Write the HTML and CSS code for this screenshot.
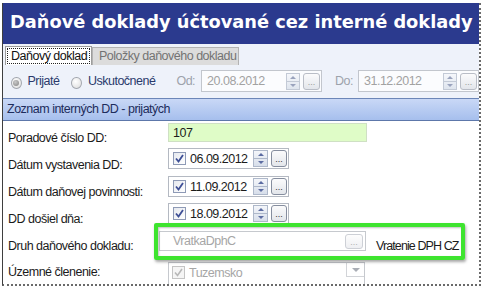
FILE: index.html
```html
<!DOCTYPE html>
<html lang="sk">
<head>
<meta charset="utf-8">
<title>Daňové doklady účtované cez interné doklady</title>
<link rel="stylesheet" href="styles.css">
</head>
<body>
<div class="frame">
  <div class="header"><h1 class="title">Daňové doklady účtované cez interné doklady</h1></div>
  <div class="top">
    <div class="tabs">
      <div class="tab active"><span class="focus">Daňový doklad</span></div>
      <div class="tab">Položky daňového dokladu</div>
    </div>
    <div class="filter">
      <span class="radio checked"></span><span class="rlabel">Prijaté</span>
      <span class="radio second"></span><span class="rlabel">Uskutočnené</span>
      <span class="flabel od">Od:</span>
      <div class="dbox disabled">
        <span class="dtext">20.08.2012</span>
        <span class="spin"><span class="up"></span><span class="down"></span></span>
        <span class="btn">...</span>
      </div>
      <span class="flabel do">Do:</span>
      <div class="dbox disabled">
        <span class="dtext">31.12.2012</span>
        <span class="spin"><span class="up"></span><span class="down"></span></span>
        <span class="btn">...</span>
      </div>
    </div>
  </div>
  <div class="section">Zoznam interných DD - prijatých</div>
  <div class="form">
    <div class="row">
      <span class="label">Poradové číslo DD:</span>
      <div class="input green r1">107</div>
    </div>
    <div class="row">
      <span class="label">Dátum vystavenia DD:</span>
      <div class="dbox form-date r2">
        <span class="check"><svg viewBox="0 0 11 11" width="11" height="11"><path d="M2 5.5 L4.5 8.5 L9 2" fill="none" stroke="#3e4f96" stroke-width="1.8"/></svg></span>
        <span class="dtext">06.09.2012</span>
        <span class="spin"><span class="up"></span><span class="down"></span></span>
        <span class="btn">...</span>
      </div>
    </div>
    <div class="row">
      <span class="label">Dátum daňovej povinnosti:</span>
      <div class="dbox form-date">
        <span class="check"><svg viewBox="0 0 11 11" width="11" height="11"><path d="M2 5.5 L4.5 8.5 L9 2" fill="none" stroke="#3e4f96" stroke-width="1.8"/></svg></span>
        <span class="dtext">11.09.2012</span>
        <span class="spin"><span class="up"></span><span class="down"></span></span>
        <span class="btn">...</span>
      </div>
    </div>
    <div class="row">
      <span class="label">DD došiel dňa:</span>
      <div class="dbox form-date">
        <span class="check"><svg viewBox="0 0 11 11" width="11" height="11"><path d="M2 5.5 L4.5 8.5 L9 2" fill="none" stroke="#3e4f96" stroke-width="1.8"/></svg></span>
        <span class="dtext">18.09.2012</span>
        <span class="spin"><span class="up"></span><span class="down"></span></span>
        <span class="btn">...</span>
      </div>
    </div>
    <div class="row">
      <span class="label">Druh daňového dokladu:</span>
      <div class="input druh">
        <span class="itext">VratkaDphC</span>
        <span class="btn faded">...</span>
      </div>
      <span class="desc">Vratenie DPH CZ</span>
    </div>
    <div class="row last">
      <span class="label">Územné členenie:</span>
      <div class="input combo">
        <span class="check off"><svg viewBox="0 0 11 11" width="11" height="11"><path d="M2 5.5 L4.5 8.5 L9 2" fill="none" stroke="#b8b8b8" stroke-width="1.6"/></svg></span>
        <span class="itext">Tuzemsko</span>
        <span class="drop"></span>
      </div>
    </div>
  </div>
  <div class="highlight"></div>
</div>
</body>
</html>
```

FILE: styles.css
```css
body {
  margin: 0;
  background: #ffffff;
  font-family: "Liberation Sans", Arial, sans-serif;
  font-size: 12.5px;
  letter-spacing: -0.5px;
  color: #1b1b1b;
}

.frame {
  position: relative;
  margin: 3px 0 0 2px;
  width: 476px;
  height: 281px;
  border-left: 1px solid #3f3f3f;
  border-right: 2px dotted #6a6a6a;
  border-bottom: 2px dotted #6a6a6a;
  overflow: hidden;
  background: #ffffff;
}

.header {
  height: 41px;
  background: #2b3a8e;
}

.title {
  margin: 0;
  padding-left: 7px;
  font: bold 17.8px/38px "DejaVu Sans", Verdana, sans-serif;
  letter-spacing: 0;
  color: #ffffff;
  white-space: nowrap;
}

.top {
  height: 54px;
  background: #eef2fa;
}

.tabs {
  display: flex;
  align-items: flex-end;
  height: 21px;
  padding-left: 2px;
}

.tab {
  box-sizing: border-box;
  height: 18px;
  width: 147px;
  padding-left: 6px;
  border: 1px solid #b3b3b3;
  border-bottom: none;
  background: #dcdcdc;
  color: #737373;
  line-height: 17px;
  white-space: nowrap;
}

.tab.active {
  width: 87px;
  height: 19px;
  padding: 1px 0 0 1px;
  background: #ffffff;
  border-color: #9c9c9c;
  color: #111111;
}

.focus {
  display: block;
  width: 83px;
  box-sizing: border-box;
  height: 16px;
  line-height: 14px;
  padding-left: 3px;
  border: 1px dotted #222222;
}

.filter {
  display: flex;
  align-items: flex-start;
  height: 33px;
}

.radio {
  box-sizing: border-box;
  width: 12px;
  height: 12px;
  margin: 12px 0 0 8px;
  border: 1px solid #a4a8b0;
  border-radius: 50%;
  background: radial-gradient(circle at 40% 35%, #ffffff 0%, #e2e2e2 80%);
  display: flex;
  align-items: center;
  justify-content: center;
}

.radio.checked::after {
  content: "";
  width: 6px;
  height: 6px;
  border-radius: 50%;
  background: radial-gradient(circle at 40% 35%, #c9c9c9 0%, #8a8a8a 90%);
}

.radio.second {
  margin-left: 12px;
}

.rlabel {
  margin: 9px 0 0 6px;
  line-height: 14px;
  color: #2a3a6c;
}

.flabel {
  margin-top: 9px;
  line-height: 14px;
  color: #9da2ab;
}

.flabel.od {
  margin-left: 21px;
  width: 29px;
}

.flabel.do {
  margin-left: 13px;
  width: 27px;
}

.dbox {
  box-sizing: border-box;
  display: flex;
  align-items: center;
  width: 121px;
  height: 22px;
  margin-top: 5px;
  padding: 0 1px 0 5px;
  border: 1px solid #c2c6cd;
  background: #fbfcfe;
  flex-shrink: 0;
}

.dbox.disabled .dtext {
  color: #a2a2a2;
}

.dtext {
  flex: 1;
  line-height: 14px;
  white-space: nowrap;
}

.spin {
  box-sizing: border-box;
  width: 14px;
  height: 17px;
  margin-right: 3px;
  border: 1px solid #c3cad6;
  background: linear-gradient(#f5f7fb, #dfe5ee);
  display: flex;
  flex-direction: column;
}

.spin .up,
.spin .down {
  flex: 1;
  display: flex;
  align-items: center;
  justify-content: center;
}

.spin .up {
  border-bottom: 1px solid #c3cad6;
}

.spin .up::after {
  content: "";
  border-left: 3px solid transparent;
  border-right: 3px solid transparent;
  border-bottom: 3px solid #9aa3bd;
}

.spin .down::after {
  content: "";
  border-left: 3px solid transparent;
  border-right: 3px solid transparent;
  border-top: 3px solid #9aa3bd;
}

.btn {
  box-sizing: border-box;
  width: 17px;
  height: 17px;
  border: 1px solid #b9bdc6;
  border-radius: 3px;
  background: linear-gradient(#fbfbfc, #e3e6eb);
  color: #9a9a9a;
  font-size: 9px;
  letter-spacing: 0;
  line-height: 17px;
  text-align: center;
}

.section {
  box-sizing: border-box;
  height: 23px;
  padding-left: 4px;
  border-top: 1px solid #6c86b8;
  border-bottom: 1px solid #5d77aa;
  background: linear-gradient(#c9d8f6, #a6bfed);
  color: #1d2c5c;
  line-height: 21px;
  white-space: nowrap;
}

.form {
  display: flex;
  flex-direction: column;
}

.row {
  display: flex;
  align-items: flex-start;
  height: 27px;
}

.label {
  width: 160px;
  padding: 10px 0 0 5px;
  line-height: 14px;
  white-space: nowrap;
  flex-shrink: 0;
}

.input {
  box-sizing: border-box;
  display: flex;
  align-items: center;
  width: 199px;
  height: 20px;
  margin-top: 1px;
  padding-left: 4px;
  border: 1px solid #c6c9ce;
  background: #ffffff;
  line-height: 14px;
  flex-shrink: 0;
}

.input.green {
  height: 19px;
  background: #dffcc7;
  border-color: #cfe0c4;
  color: #1b1b1b;
}

.r1 {
  margin-top: 2px;
}

.form-date {
  height: 21px;
  margin-top: 1px;
  padding-left: 4px;
  border-color: #b4b9c2;
  background: #ffffff;
}

.form-date .dtext {
  color: #1b1b1b;
}

.form-date .spin {
  width: 15px;
  border-color: #aeb8ca;
  background: linear-gradient(#f4f6fa, #d7deea);
}

.form-date .spin .up {
  border-bottom-color: #aeb8ca;
}

.form-date .spin .up::after {
  border-bottom-color: #5c6ca2;
}

.form-date .spin .down::after {
  border-top-color: #5c6ca2;
}

.form-date .btn {
  width: 16px;
  border-color: #868e9f;
  color: #333333;
}

.r2 {
  margin-top: 0;
}

.check {
  box-sizing: border-box;
  width: 13px;
  height: 13px;
  margin-right: 4px;
  border: 1px solid #8e9ab6;
  background: linear-gradient(135deg, #e6e9ef, #ffffff);
  display: flex;
  align-items: center;
  justify-content: center;
  flex-shrink: 0;
}

.check.off {
  border-color: #c4c4c4;
  background: #f5f5f5;
}

.druh {
  width: 207px;
  height: 20px;
  margin-left: -9px;
  margin-top: 2px;
  padding-left: 13px;
  padding-right: 2px;
}

.itext {
  flex: 1;
  color: #a6a6a6;
}

.btn.faded {
  width: 18px;
  height: 15px;
  line-height: 14px;
  border-color: #cdd0d6;
  background: linear-gradient(#fdfdfd, #eeeff2);
  color: #b0b0b0;
}

.desc {
  margin: 10px 0 0 10px;
  line-height: 14px;
  white-space: nowrap;
  letter-spacing: -0.9px;
}

.row.last .label {
  padding-top: 9px;
}

.combo {
  width: 197px;
  height: 24px;
  margin-top: 6px;
  padding-left: 3px;
  padding-right: 0;
  align-items: flex-start;
  padding-top: 3px;
}

.drop {
  box-sizing: border-box;
  width: 18px;
  height: 14px;
  margin-top: -3px;
  border-left: 1px solid #d2d4d8;
  border-bottom: 1px solid #d2d4d8;
  display: flex;
  align-items: center;
  justify-content: center;
}

.drop::after {
  content: "";
  border-left: 4px solid transparent;
  border-right: 4px solid transparent;
  border-top: 4px solid #a9adb5;
}

.highlight {
  position: absolute;
  left: 151px;
  top: 220px;
  width: 303px;
  height: 29px;
  border: 4px solid #3ee42f;
  border-radius: 2px;
  box-shadow: 1px 2px 3px rgba(0, 0, 0, 0.35), inset 1px 1px 2px rgba(0, 0, 0, 0.25);
}
```
